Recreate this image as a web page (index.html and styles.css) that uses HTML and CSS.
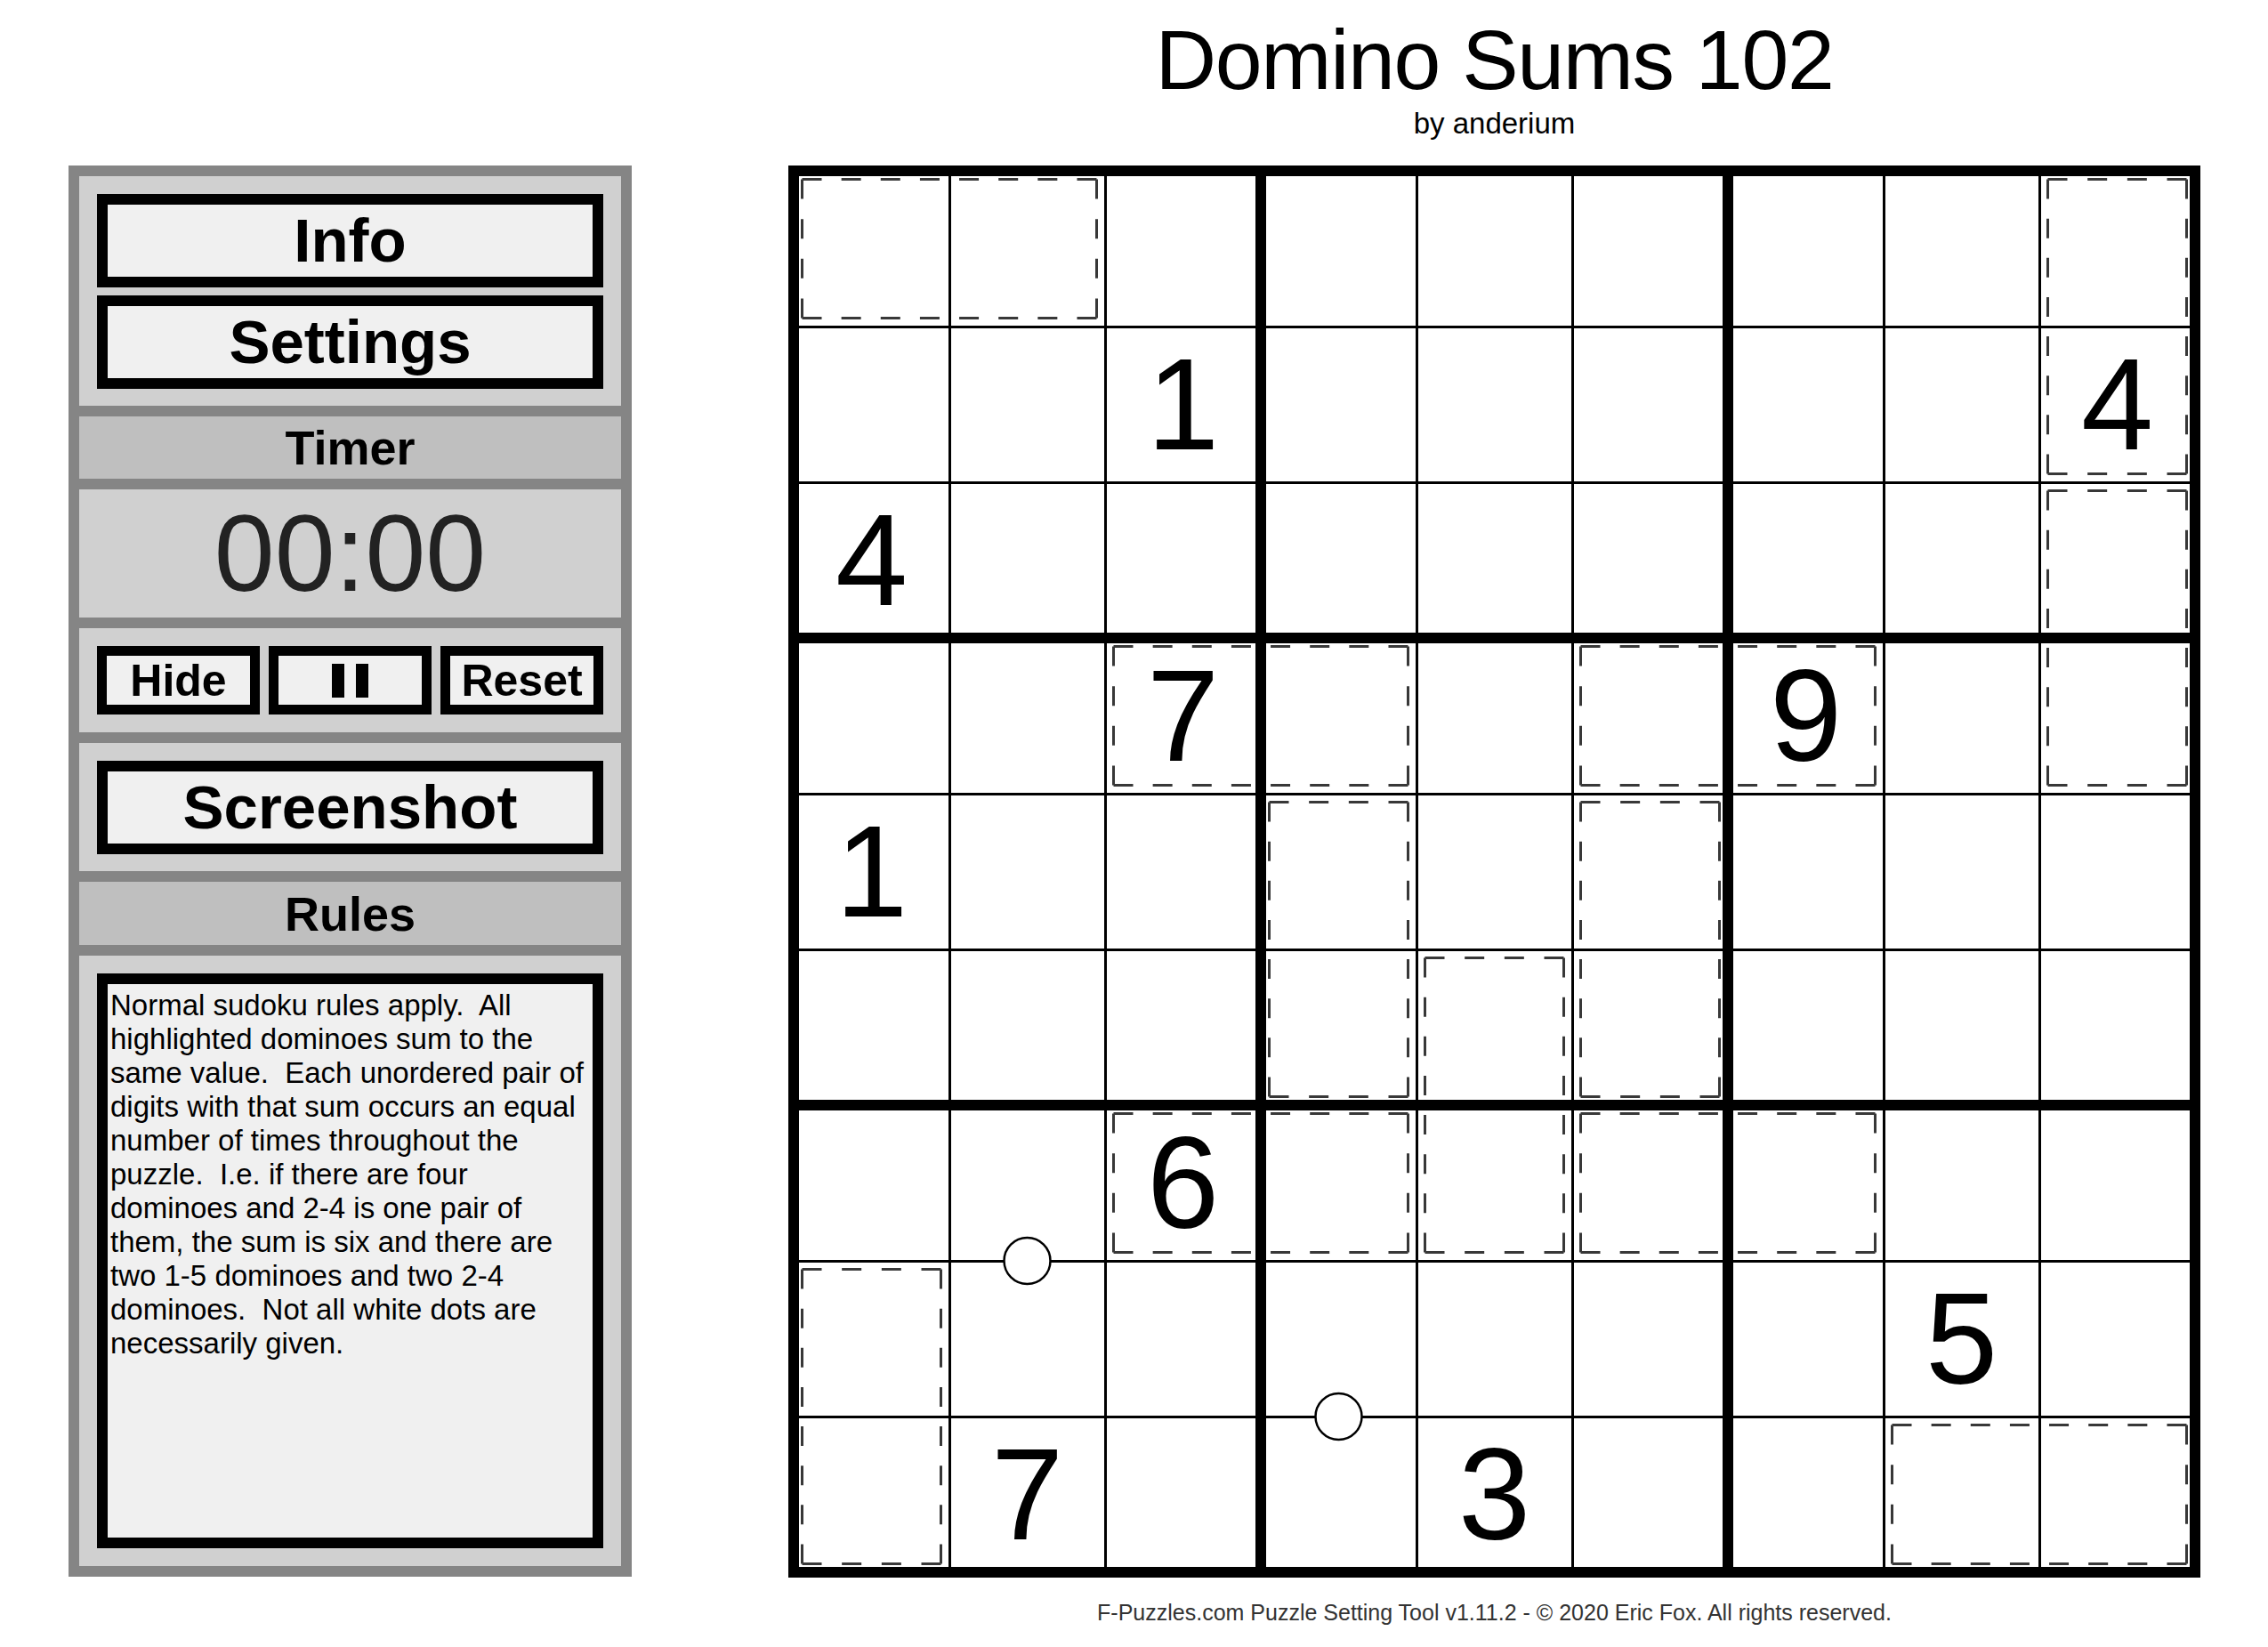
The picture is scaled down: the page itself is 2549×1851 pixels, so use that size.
FILE: index.html
```html
<!DOCTYPE html>
<html lang="en">
<head>
<meta charset="utf-8">
<title>Domino Sums 102</title>
<link rel="stylesheet" href="styles.css">
</head>
<body>
<div class="page">
  <aside class="panel">
    <section class="sec sec-nav">
      <div class="btn">Info</div>
      <div class="btn">Settings</div>
    </section>
    <section class="sec-head head-timer">Timer</section>
    <section class="sec sec-clock">00:00</section>
    <section class="sec sec-ctrl">
      <div class="btn btn-sm">Hide</div>
      <div class="btn btn-sm pause"><span class="bar"></span><span class="bar"></span></div>
      <div class="btn btn-sm">Reset</div>
    </section>
    <section class="sec sec-shot">
      <div class="btn">Screenshot</div>
    </section>
    <section class="sec-head head-rules">Rules</section>
    <section class="sec sec-rules">
      <div class="rules-box">Normal sudoku rules apply.  All highlighted dominoes sum to the same value.  Each unordered pair of digits with that sum occurs an equal number of times throughout the puzzle.  I.e. if there are four dominoes and 2-4 is one pair of them, the sum is six and there are two 1-5 dominoes and two 2-4 dominoes.  Not all white dots are necessarily given.</div>
    </section>
  </aside>

  <main class="main">
    <h1 class="title">Domino Sums 102</h1>
    <div class="author">by anderium</div>
    <div class="board">
      <div class="cells">
        <div class="cell"></div><div class="cell"></div><div class="cell"></div><div class="cell"></div><div class="cell"></div><div class="cell"></div><div class="cell"></div><div class="cell"></div><div class="cell"></div>
        <div class="cell"></div><div class="cell"></div><div class="cell">1</div><div class="cell"></div><div class="cell"></div><div class="cell"></div><div class="cell"></div><div class="cell"></div><div class="cell">4</div>
        <div class="cell">4</div><div class="cell"></div><div class="cell"></div><div class="cell"></div><div class="cell"></div><div class="cell"></div><div class="cell"></div><div class="cell"></div><div class="cell"></div>
        <div class="cell"></div><div class="cell"></div><div class="cell">7</div><div class="cell"></div><div class="cell"></div><div class="cell"></div><div class="cell">9</div><div class="cell"></div><div class="cell"></div>
        <div class="cell">1</div><div class="cell"></div><div class="cell"></div><div class="cell"></div><div class="cell"></div><div class="cell"></div><div class="cell"></div><div class="cell"></div><div class="cell"></div>
        <div class="cell"></div><div class="cell"></div><div class="cell"></div><div class="cell"></div><div class="cell"></div><div class="cell"></div><div class="cell"></div><div class="cell"></div><div class="cell"></div>
        <div class="cell"></div><div class="cell"></div><div class="cell">6</div><div class="cell"></div><div class="cell"></div><div class="cell"></div><div class="cell"></div><div class="cell"></div><div class="cell"></div>
        <div class="cell"></div><div class="cell"></div><div class="cell"></div><div class="cell"></div><div class="cell"></div><div class="cell"></div><div class="cell"></div><div class="cell">5</div><div class="cell"></div>
        <div class="cell"></div><div class="cell">7</div><div class="cell"></div><div class="cell"></div><div class="cell">3</div><div class="cell"></div><div class="cell"></div><div class="cell"></div><div class="cell"></div>
      </div>
      <svg class="marks" width="1587" height="1587" viewBox="0 0 1587 1587" aria-hidden="true">
        <g class="cage">
          <!-- A: r0 c0-1 -->
          <path class="long" d="M15.5 15.5H346.5M15.5 171.5H346.5"/>
          <path class="short" d="M15.5 15.5V171.5M346.5 15.5V171.5"/>
          <!-- B: c8 r0-1 -->
          <path class="long" d="M1415.5 15.5V346.5M1571.5 15.5V346.5"/>
          <path class="short" d="M1415.5 15.5H1571.5M1415.5 346.5H1571.5"/>
          <!-- C: c8 r2-3 -->
          <path class="long" d="M1415.5 365.5V696.5M1571.5 365.5V696.5"/>
          <path class="short" d="M1415.5 365.5H1571.5M1415.5 696.5H1571.5"/>
          <!-- D: r3 c2-3 -->
          <path class="long" d="M365.5 540.5H696.5M365.5 696.5H696.5"/>
          <path class="short" d="M365.5 540.5V696.5M696.5 540.5V696.5"/>
          <!-- E: r3 c5-6 -->
          <path class="long" d="M890.5 540.5H1221.5M890.5 696.5H1221.5"/>
          <path class="short" d="M890.5 540.5V696.5M1221.5 540.5V696.5"/>
          <!-- F: c3 r4-5 -->
          <path class="long" d="M540.5 715.5V1046.5M696.5 715.5V1046.5"/>
          <path class="short" d="M540.5 715.5H696.5M540.5 1046.5H696.5"/>
          <!-- G: c5 r4-5 -->
          <path class="long" d="M890.5 715.5V1046.5M1046.5 715.5V1046.5"/>
          <path class="short" d="M890.5 715.5H1046.5M890.5 1046.5H1046.5"/>
          <!-- H: c4 r5-6 -->
          <path class="long" d="M715.5 890.5V1221.5M871.5 890.5V1221.5"/>
          <path class="short" d="M715.5 890.5H871.5M715.5 1221.5H871.5"/>
          <!-- I: r6 c2-3 -->
          <path class="long" d="M365.5 1065.5H696.5M365.5 1221.5H696.5"/>
          <path class="short" d="M365.5 1065.5V1221.5M696.5 1065.5V1221.5"/>
          <!-- J: r6 c5-6 -->
          <path class="long" d="M890.5 1065.5H1221.5M890.5 1221.5H1221.5"/>
          <path class="short" d="M890.5 1065.5V1221.5M1221.5 1065.5V1221.5"/>
          <!-- K: c0 r7-8 -->
          <path class="long" d="M15.5 1240.5V1571.5M171.5 1240.5V1571.5"/>
          <path class="short" d="M15.5 1240.5H171.5M15.5 1571.5H171.5"/>
          <!-- L: r8 c7-8 -->
          <path class="long" d="M1240.5 1415.5H1571.5M1240.5 1571.5H1571.5"/>
          <path class="short" d="M1240.5 1415.5V1571.5M1571.5 1415.5V1571.5"/>
        </g>
        <circle class="dot" cx="268.5" cy="1231" r="26"/>
        <circle class="dot" cx="618.5" cy="1406" r="26"/>
      </svg>
    </div>
    <div class="footer">F-Puzzles.com Puzzle Setting Tool v1.11.2 - © 2020 Eric Fox. All rights reserved.</div>
  </main>
</div>
</body>
</html>
```

FILE: styles.css
```css
* { box-sizing: border-box; }

html, body {
  margin: 0;
  padding: 0;
  background: #ffffff;
}

body {
  font-family: "Liberation Sans", Arial, Helvetica, sans-serif;
  color: #000;
}

.page {
  display: flex;
  align-items: flex-start;
  gap: 176px;
  padding-left: 77px;
  width: 2549px;
  height: 1851px;
  overflow: hidden;
}

/* ---------- side panel ---------- */
.panel {
  flex: none;
  margin-top: 186px;
  width: 633px;
  height: 1586px;
  border: 12px solid #858585;
  background: #858585;
  display: flex;
  flex-direction: column;
  gap: 12px;
}

.sec {
  background: #d0d0d0;
  flex: none;
}

.sec-nav {
  height: 258px;
  padding: 20px 20px 0;
  display: flex;
  flex-direction: column;
  gap: 9px;
}

.btn {
  height: 105px;
  border: 12px solid #000;
  background: #f0f0f0;
  display: flex;
  align-items: center;
  justify-content: center;
  font-weight: bold;
  font-size: 69px;
  line-height: 1;
  color: #000;
}

.sec-head {
  flex: none;
  background: #bfbfbf;
  display: flex;
  align-items: center;
  justify-content: center;
  font-weight: bold;
  font-size: 54px;
  line-height: 1;
}

.head-timer { height: 70px; }
.head-rules { height: 71px; }

.sec-clock {
  height: 144px;
  display: flex;
  align-items: center;
  justify-content: center;
  font-size: 122px;
  line-height: 1;
  color: #222;
}

.sec-ctrl {
  height: 117px;
  padding: 20px;
  display: flex;
  gap: 10px;
}

.btn-sm {
  flex: 1;
  height: 77px;
  border-width: 11px;
  font-size: 50px;
}

.pause { gap: 13px; }

.bar {
  width: 14px;
  height: 38px;
  background: #000;
}

.sec-shot {
  height: 144px;
  padding: 20px;
}

.sec-rules {
  flex: 1;
  padding: 20px;
}

.rules-box {
  height: 100%;
  border: 12px solid #000;
  background: #f0f0f0;
  padding: 5px 3px;
  font-size: 33px;
  line-height: normal;
  white-space: pre-wrap;
  color: #000;
}

/* ---------- main area ---------- */
.main {
  flex: none;
  width: 1587px;
  display: flex;
  flex-direction: column;
  align-items: center;
}

.title {
  margin: 20px 0 0;
  font-size: 95px;
  line-height: 95px;
  font-weight: normal;
  letter-spacing: -1.3px;
  white-space: nowrap;
}

.author {
  margin-top: 7px;
  font-size: 33px;
  line-height: 33px;
}

.board {
  position: relative;
  margin-top: 31px;
  width: 1587px;
  height: 1587px;
  background-color: #fff;
  background-image:
    linear-gradient(to right, #000 12px, transparent 12px),
    linear-gradient(to bottom, #000 12px, transparent 12px),
    linear-gradient(to right, #000 3px, transparent 3px),
    linear-gradient(to bottom, #000 3px, transparent 3px);
  background-size:
    525px 100%,
    100% 525px,
    175px 100%,
    100% 175px;
  background-position:
    0 0,
    0 0,
    5px 0,
    0 5px;
  background-repeat: repeat-x, repeat-y, repeat-x, repeat-y;
}

.cells {
  position: absolute;
  inset: 0;
  padding: 6px;
  display: grid;
  grid-template-columns: repeat(9, 175px);
  grid-template-rows: repeat(9, 175px);
}

.cell {
  display: flex;
  align-items: center;
  justify-content: center;
  font-size: 146px;
  line-height: 1;
  color: #000;
}

.marks {
  position: absolute;
  left: 0;
  top: 0;
  pointer-events: none;
}

.cage path {
  fill: none;
  stroke: #383838;
  stroke-width: 3;
}

.cage .long { stroke-dasharray: 22 22.14; }
.cage .short { stroke-dasharray: 22 22.67; }

.dot {
  fill: #fff;
  stroke: #000;
  stroke-width: 2.5;
}

.footer {
  margin-top: 27px;
  font-size: 25px;
  line-height: 25px;
  color: #333;
  white-space: nowrap;
}
```
